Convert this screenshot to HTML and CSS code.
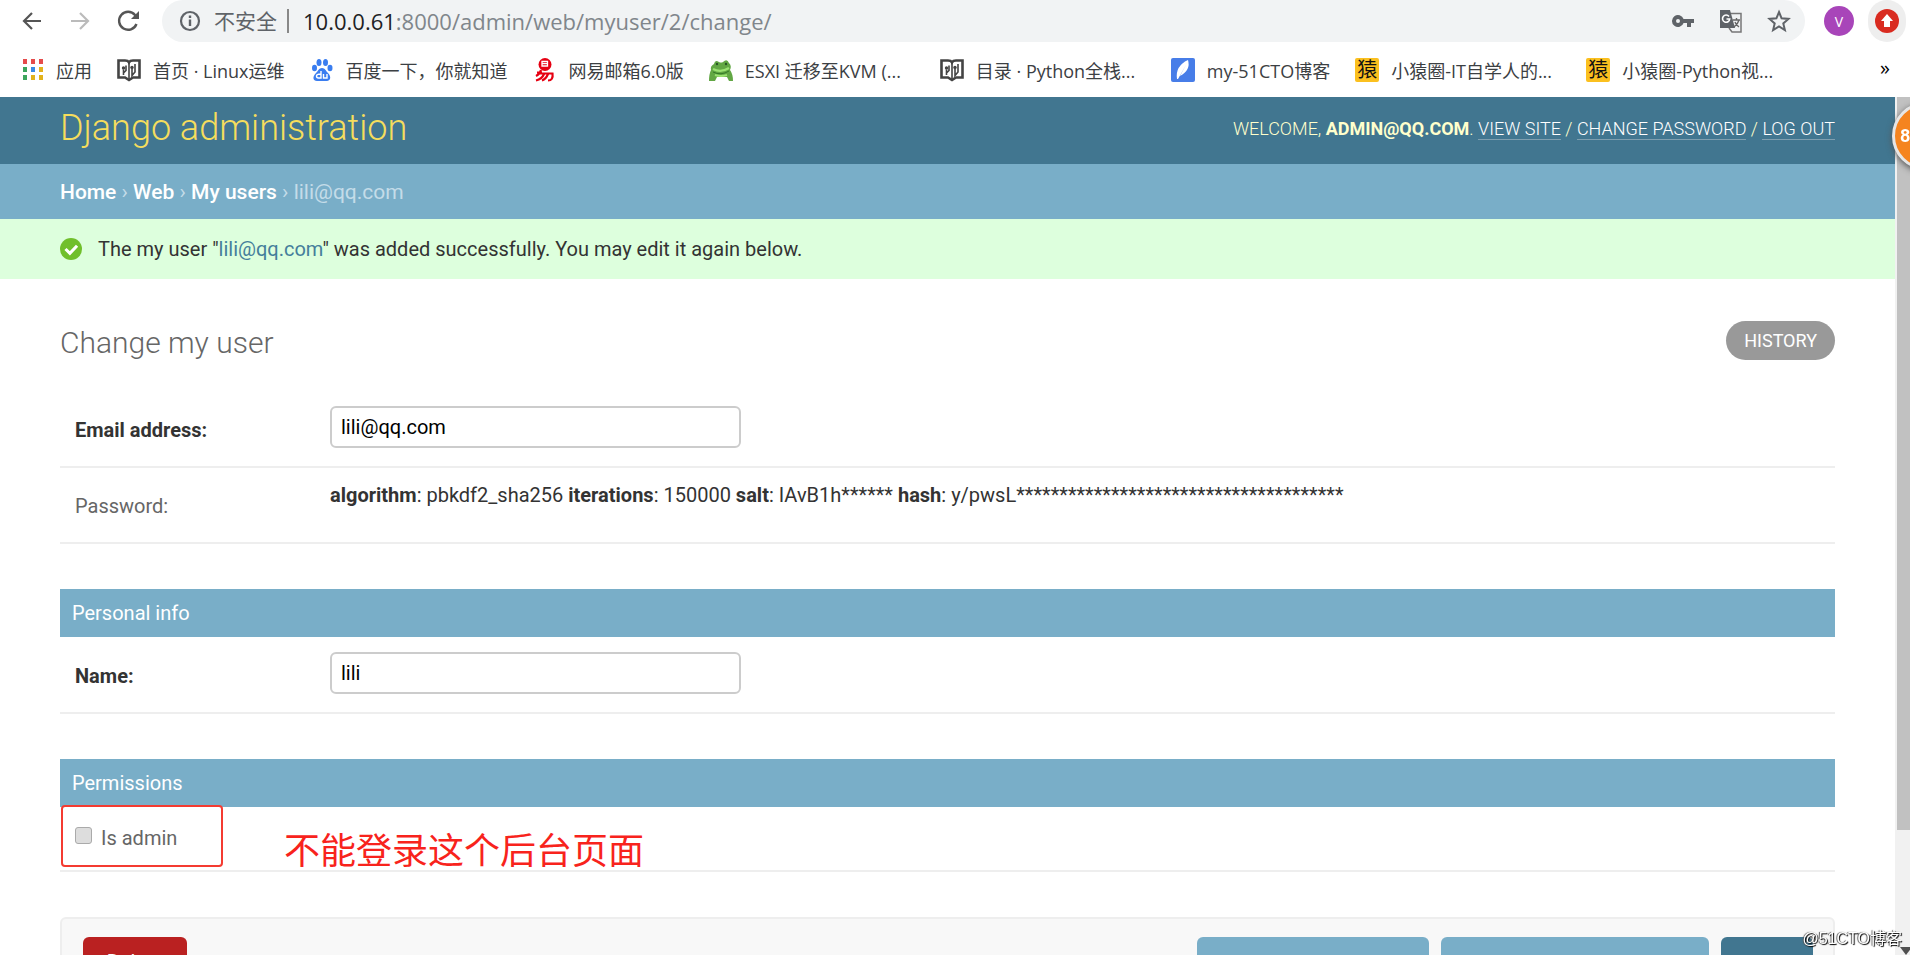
FILE: index.html
```html
<!DOCTYPE html>
<html lang="zh-CN">
<head>
<meta charset="utf-8">
<title>Change my user | Django site admin</title>
<link rel="stylesheet" href="styles.css">
</head>
<body>
<svg class="defs" aria-hidden="true">
  <symbol id="book" viewBox="0 0 24 24"><path d="M1.500 2.500H8q3 0 4 1.800 1-1.800 4-1.800h6.500v17H16l-4 2.500-4-2.500H1.500z" fill="none" stroke="#444" stroke-width="2.600"/><path d="M12 5v16M6.500 17v-5.500M6.500 15l2.500-2.500V7.500M18 6v8l-3 3.500V11" fill="none" stroke="#444" stroke-width="1.600"/><circle cx="6.500" cy="10" r="1.700" fill="#444"/><circle cx="15" cy="9.500" r="1.700" fill="#444"/></symbol>
</svg>
<div class="browser">
  <div class="toolbar">
    <button class="tool" aria-label="Back"><svg viewBox="0 0 24 24"><path d="M21 12H4m8-8l-8 8 8 8" fill="none" stroke="#555" stroke-width="2.200"/></svg></button>
    <button class="tool" aria-label="Forward"><svg viewBox="0 0 24 24"><path d="M3 12h17m-8-8l8 8-8 8" fill="none" stroke="#bbb" stroke-width="2.200"/></svg></button>
    <button class="tool" aria-label="Reload"><svg viewBox="0 0 24 24"><path d="M20.500 15a9 9 0 1 1-1.500-9l2 2" fill="none" stroke="#555" stroke-width="2.400"/><path d="M23 2v8h-8z" fill="#555"/></svg></button>
    <div class="address">
      <svg class="icon" viewBox="0 0 24 24"><circle cx="12" cy="12" r="9" fill="none" stroke="#5f6368" stroke-width="2.200"/><path d="M12 10.500V17M12 6.500V9" stroke="#5f6368" stroke-width="2.400"/></svg>
      <span class="insecure">不安全</span>
      <span class="url"><b>10.0.0.61</b>:8000/admin/web/myuser/2/change/</span>
      <button class="tool" aria-label="Passwords"><svg viewBox="0 0 24 24"><path fill="#5f6368" fill-rule="evenodd" d="M12.600 10a6 6 0 1 0 0 4H16v4h4v-4h3v-4zM7 14a2 2 0 1 1 0-4 2 2 0 0 1 0 4z"/></svg></button>
      <button class="tool" aria-label="Translate"><svg viewBox="0 0 24 24"><path d="M11 4.500h11V23H13l-3-4" fill="none" stroke="#777" stroke-width="1.500"/><path d="M1 1h10l5 18H1z" fill="#5f6368"/><path d="M10 7.500A3.600 3.600 0 1 0 10.700 10H7.500" fill="none" stroke="#fff" stroke-width="1.600"/><path d="M13.500 11H21m-3.500-2V11m2.500 0q-1 4-5 7m1-5q1 3 4 5" fill="none" stroke="#666" stroke-width="1.400"/></svg></button>
      <button class="tool" aria-label="Bookmark"><svg viewBox="0 0 24 24"><path d="M12 3l2.600 6.300 6.900.6-5.200 4.500 1.600 6.700-5.900-3.600-5.900 3.600 1.600-6.700-5.200-4.500 6.900-.6z" fill="none" stroke="#5f6368" stroke-width="2"/></svg></button>
    </div>
    <button class="avatar">V</button>
    <button class="update" aria-label="Update"><svg viewBox="0 0 24 24"><circle cx="12" cy="12" r="12" fill="#d92b20"/><path d="M12 5l6 7h-3v6H9v-6H6z" fill="#fff"/></svg></button>
  </div>
  <nav class="bookmarks">
    <a href="#" class="bm"><svg class="icon" viewBox="0 0 24 24"><path d="M3 1h4v5H3zM11 1h4v5h-4zM19 1h4v5h-4z" fill="#e54b4b"/><path d="M3 9h4v5H3zM3 17h4v5H3z" fill="#3ba55c"/><path d="M11 9h4v5h-4z" fill="#3b8be5"/><path d="M19 9h4v5h-4zM11 17h4v5h-4zM19 17h4v5h-4z" fill="#e2b21b"/></svg>应用</a>
    <a href="#" class="bm"><svg class="icon"><use href="#book"/></svg>首页 · Linux运维</a>
    <a href="#" class="bm"><svg class="icon" viewBox="0 0 24 24"><g fill="#3a7df0"><ellipse cx="4.500" cy="10" rx="2.500" ry="3.300"/><ellipse cx="9" cy="4.500" rx="2.500" ry="3.500"/><ellipse cx="15.500" cy="4.500" rx="2.500" ry="3.500"/><ellipse cx="20" cy="10" rx="2.500" ry="3.300"/><path d="M12 10c3 0 4 3 6 5 4 4 2 8-1 8H7c-4 0-5-4-1-8 2-2 3-5 6-5z"/></g><path d="M11 13v7H8.500q-2 0-2-2 0-2 4.500-2M13.500 16v4H17v-4" fill="none" stroke="#fff" stroke-width="1.400"/></svg>百度一下，你就知道</a>
    <a href="#" class="bm"><svg class="icon" viewBox="0 0 24 24"><circle cx="12" cy="6.500" r="6.500" fill="#e60012"/><path d="M9 3.500h5.500v4.500H9zm0 2.200h5.500" fill="none" stroke="#fff" stroke-width="1.300"/><path d="M4 14.500h5M8 12q-1 4-5 6m3-2.500h13.500q1 7-4.500 7M11 16q-2 5-8 6.500m12-6.500q-2 5-6 6.500" fill="none" stroke="#e60012" stroke-width="2.200"/></svg>网易邮箱6.0版</a>
    <a href="#" class="bm wide"><svg class="icon" viewBox="0 0 24 24"><path d="M2 12Q1 8 5 6q1-5 5-2 2 1 4 0 4-4 6 1 3 3 1 7 3 4 3 11h-4l-2-4H8l-2 4H0q0-7 2-11z" fill="#62a744"/><path d="M4 11q8 4 16-1M6 17q6 2 12 0" stroke="#9be272" stroke-width="2.200" fill="none"/><path d="M4 14q8 4 16-1" stroke="#347a28" stroke-width="1" fill="none"/><circle cx="8" cy="6" r="1.200" fill="#285525"/><circle cx="17" cy="6" r="1.200" fill="#285525"/></svg>ESXI 迁移至KVM (...</a>
    <a href="#" class="bm wide"><svg class="icon"><use href="#book"/></svg>目录 · Python全栈...</a>
    <a href="#" class="bm"><svg class="icon" viewBox="0 0 24 24"><rect width="24" height="24" rx="2" fill="#477de8"/><path d="M6 21Q4 8 17 2q3 10-8 16l6-11L7 21z" fill="#fff"/></svg>my-51CTO博客</a>
    <a href="#" class="bm wide"><span class="yuan">猿</span>小猿圈-IT自学人的...</a>
    <a href="#" class="bm wide"><span class="yuan">猿</span>小猿圈-Python视...</a>
    <button class="more" aria-label="More bookmarks">»</button>
  </nav>
</div>
<div class="viewport">
  <div class="page">
    <header class="header">
      <a href="#" class="brand">Django administration</a>
      <div class="user-tools">Welcome, <strong>admin@qq.com</strong>. <a href="#">View site</a> / <a href="#">Change password</a> / <a href="#">Log out</a></div>
    </header>
    <nav class="breadcrumbs"><a href="#">Home</a> › <a href="#">Web</a> › <a href="#">My users</a> › lili@qq.com</nav>
    <div class="message"><svg viewBox="0 0 20 20"><circle cx="10" cy="10" r="10" fill="#70bf2b"/><path d="M5 10l4 4 6.500-7" fill="none" stroke="#fff" stroke-width="2.800"/></svg><span>The my user "<a href="#">lili@qq.com</a>" was added successfully. You may edit it again below.</span></div>
    <main class="content">
      <div class="title-row"><h1>Change my user</h1><a href="#" class="history">History</a></div>
      <form>
        <section class="module">
          <div class="row"><label class="required" for="email">Email address:</label><input class="text" id="email" type="text" value="lili@qq.com"></div>
          <div class="row"><span class="label">Password:</span><div class="readonly"><strong>algorithm</strong>: pbkdf2_sha256 <strong>iterations</strong>: 150000 <strong>salt</strong>: IAvB1h****** <strong>hash</strong>: y/pwsL**************************************</div></div>
        </section>
        <section class="module">
          <h2>Personal info</h2>
          <div class="row"><label class="required" for="name">Name:</label><input class="text" id="name" type="text" value="lili"></div>
        </section>
        <section class="module">
          <h2>Permissions</h2>
          <div class="row permission"><input type="checkbox" id="admin"><label for="admin">Is admin</label><span class="mark"></span><span class="note">不能登录这个后台页面</span></div>
        </section>
        <div class="submit"><a href="#" class="delete">Delete</a><button type="button" class="another">Save and add another</button><button type="button" class="continue">Save and continue editing</button><button type="button" class="save">SAVE</button></div>
      </form>
    </main>
  </div>
  <div class="scrollbar"><div class="thumb"></div><svg class="down" viewBox="0 0 12 8"><path d="M0 0h12L6 8z" fill="#505050"/></svg></div>
</div>
<div class="badge">8</div>
<div class="watermark">@51CTO博客</div>
</body>
</html>
```
FILE: styles.css
```css
* { box-sizing: border-box; }
body { margin: 0; height: 100vh; overflow: hidden; display: flex; flex-direction: column; background: #fff; color: #333; font-family: Roboto, "Noto Sans CJK SC", sans-serif; font-size: 20px; }
a { color: inherit; text-decoration: none; }
button { border: 0; padding: 0; background: none; font: inherit; }
svg { flex: none; display: block; }
.defs { position: absolute; width: 0; height: 0; }
.browser { flex: none; font-family: "Open Sans", "Noto Sans CJK SC", sans-serif; }
.toolbar { height: 42px; display: flex; align-items: center; padding-left: 20px; }
.tool { width: 24px; height: 24px; margin-right: 24px; flex: none; }
.tool svg { width: 24px; height: 24px; }
.address { flex: 1; min-width: 0; height: 42px; padding-left: 16px; margin-left: -2px; display: flex; align-items: center; background: #f1f3f4; border-radius: 21px; font-size: 22px; color: #80868b; }
.icon { width: 24px; height: 24px; margin-right: 12px; }
.insecure { font-size: 21px; color: #5f6368; padding-right: 10px; border-right: 2px solid #888; line-height: 24px; margin-right: 14px; }
.url { flex: 1; white-space: nowrap; }
.url b { font-weight: 400; color: #202124; }
.address .tool:last-child { margin-right: 14px; }
.avatar { width: 30px; height: 30px; border-radius: 50%; background: #a845b9; color: #fff; font-size: 14px; margin: 0 14px 0 19px; }
.update { width: 38px; height: 42px; border-radius: 19px; background: #eee; display: grid; place-items: center; margin-right: 4px; }
.update svg { width: 24px; height: 24px; }
.bookmarks { height: 55px; display: flex; align-items: center; padding: 0 20px; font-size: 18px; color: #3c4043; }
.bm { display: flex; align-items: center; white-space: nowrap; margin-right: 25px; }
.wide { width: 206px; }
.more { margin-left: auto; font-size: 20px; line-height: 24px; padding-bottom: 4px; }
.yuan { width: 24px; height: 24px; background: #fbc01f; color: #111; border-radius: 2px; display: grid; place-items: center; font-size: 20px; line-height: 24px; margin-right: 12px; }
.viewport { flex: 1; min-height: 0; display: flex; overflow: hidden; }
.page { flex: 1; min-width: 0; }
.header { height: 67px; padding: 0 60px 5px; display: flex; align-items: center; justify-content: space-between; background: #417690; color: #ffc; }
.brand { color: #f5dd5d; font-size: 36px; font-weight: 300; }
.user-tools { font-size: 18px; font-weight: 300; text-transform: uppercase; }
.user-tools strong { font-weight: 700; }
.user-tools a { color: #fff; border-bottom: 1px solid #7f9fb0; }
.breadcrumbs { height: 55px; padding: 0 60px; background: #79aec8; color: #c4dce8; font-size: 21px; line-height: 57px; }
.breadcrumbs a { color: #fff; font-weight: 500; }
.message { height: 60px; padding: 0 60px; background: #dfd; display: flex; align-items: center; gap: 16px; }
.message svg { width: 22px; height: 22px; }
.message a { color: #447e9b; }
.content { padding: 40px 60px; }
.title-row { display: flex; justify-content: space-between; align-items: flex-start; height: 72px; }
h1 { margin: 0; font-size: 30px; line-height: 48px; font-weight: 300; color: #666; }
.history { margin-top: 2px; padding: 0 18px; border-radius: 20px; background: #999; color: #fff; font-size: 18px; line-height: 39px; text-transform: uppercase; }
.module { margin-bottom: 45px; }
h2 { margin: 0; padding: 0 12px; height: 48px; line-height: 48px; font-size: 20px; font-weight: 400; color: #fff; background: #79aec8; }
.row { display: flex; height: 77px; padding: 15px; border-bottom: 2px solid #eee; }
.row + .row { height: 76px; padding-top: 14px; }
.row .label, .row .required { width: 255px; flex: none; line-height: 48px; }
.required { font-weight: 700; }
.label { color: #666; }
.text { width: 411px; height: 42px; border: 2px solid #ccc; border-radius: 6px; padding: 0 9px; font: inherit; color: #000; background: #fff; }
.readonly { line-height: 26px; }
.row.permission { position: relative; height: 65px; padding-top: 17px; color: #666; }
.permission input { appearance: none; margin: 3px 9px 0 0; width: 17px; height: 17px; border: 1px solid #aaa; border-radius: 3px; background: #ddd; }
.permission label { line-height: 28px; }
.mark { position: absolute; left: 1px; top: -2px; width: 162px; height: 62px; border: 2px solid #f43b31; border-radius: 4px; }
.note { position: absolute; left: 224px; top: 14px; color: #f8231c; font-size: 36px; line-height: 54px; white-space: nowrap; font-family: "Noto Sans CJK SC", sans-serif; }
.submit { display: flex; gap: 12px; padding: 18px 20px 18px 21px; border: 2px solid #eee; border-radius: 6px; background: #f8f8f8; }
.submit > * { height: 53px; line-height: 53px; border-radius: 6px; text-align: center; color: #fff; }
.submit .delete { width: 104px; line-height: 50px; background: #ba2121; margin-right: auto; }
.another { width: 232px; background: #79aec8; }
.continue { width: 268px; background: #79aec8; }
.save { width: 92px; background: #417690; }
.scrollbar { width: 15px; flex: none; position: relative; background: #f1f1f1; padding-left: 2px; }
.thumb { height: 85.4%; background: #c1c1c1; }
.down { position: absolute; right: -2px; bottom: 0; width: 12px; height: 8px; }
.badge { position: fixed; top: 102px; right: -50px; width: 68px; height: 68px; border-radius: 50%; border: 3px solid #e6e6e6; background: #f5841f; color: #fff; padding-left: 5px; line-height: 62px; font-size: 18px; font-weight: 700; box-shadow: 0 2px 6px #555; }
.watermark { position: fixed; right: 8px; bottom: 6px; color: #fff; font: 16px "Liberation Sans", "Noto Sans CJK SC", sans-serif; text-shadow: 1px 1px 1px #000, -1px 0 1px #555; }
```
